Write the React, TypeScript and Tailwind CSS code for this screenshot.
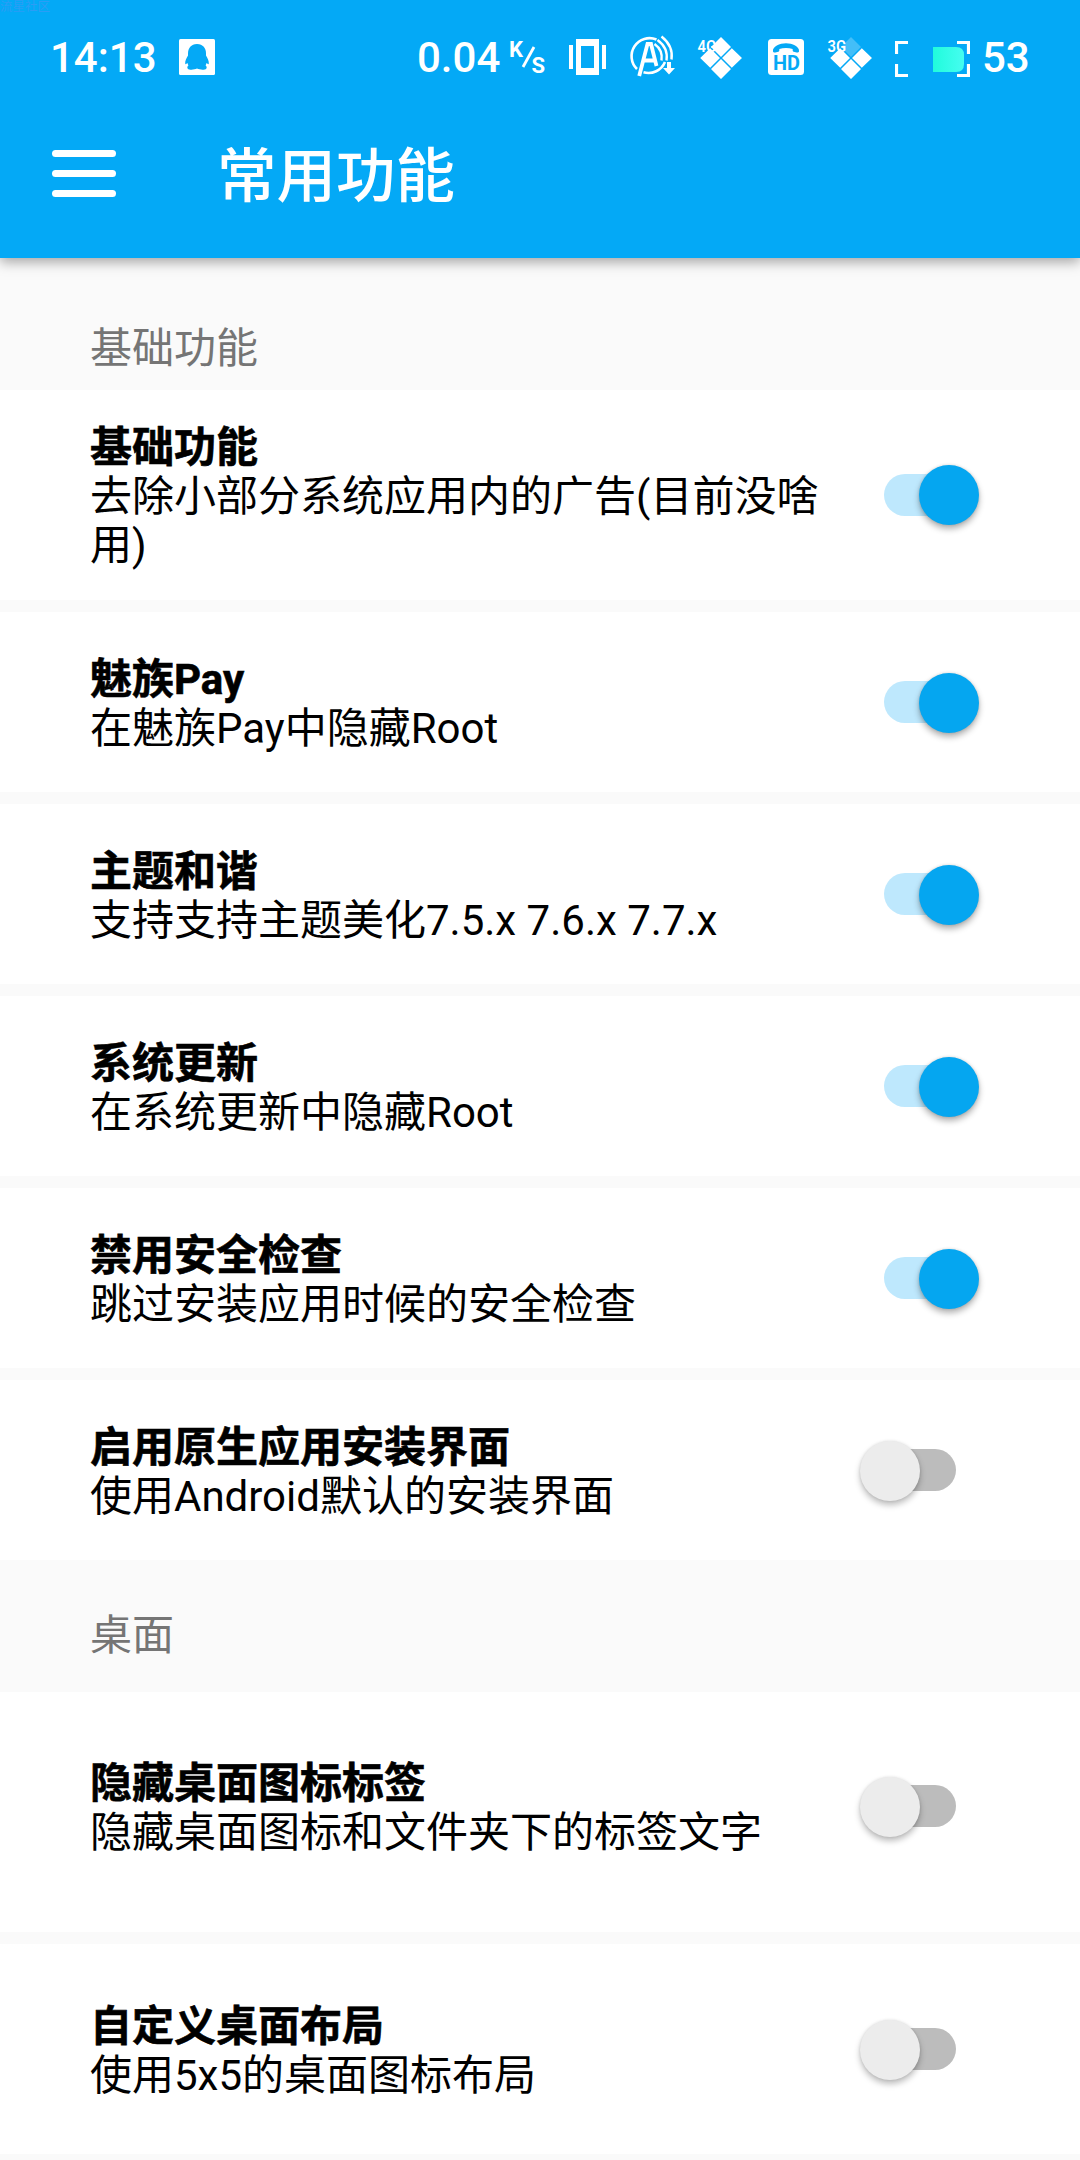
import React from "react";

type Item = { title: string; desc: string; on: boolean; size: string };

const basic: Item[] = [
  { title: "基础功能", desc: "去除小部分系统应用内的广告(目前没啥用)", on: true, size: "h-[210px] pb-px" },
  { title: "魅族Pay", desc: "在魅族Pay中隐藏Root", on: true, size: "h-[180px]" },
  { title: "主题和谐", desc: "支持支持主题美化7.5.x 7.6.x 7.7.x", on: true, size: "h-[180px]" },
  { title: "系统更新", desc: "在系统更新中隐藏Root", on: true, size: "h-[180px]" },
  { title: "禁用安全检查", desc: "跳过安装应用时候的安全检查", on: true, size: "h-[180px]" },
  { title: "启用原生应用安装界面", desc: "使用Android默认的安装界面", on: false, size: "h-[180px]" },
];

const desktop: Item[] = [
  { title: "隐藏桌面图标标签", desc: "隐藏桌面图标和文件夹下的标签文字", on: false, size: "h-[240px] pb-3" },
  { title: "自定义桌面布局", desc: "使用5x5的桌面图标布局", on: false, size: "h-[210px]" },
];

function Toggle({ on }: { on: boolean }) {
  return (
    <div role="switch" aria-checked={on} className="relative flex h-[60px] w-[120px] shrink-0 items-center px-6">
      <div className={on ? "h-[42px] w-[72px] rounded-full bg-[#bee8fd]" : "h-[42px] w-[72px] rounded-full bg-[#bcbcbc]"} />
      <div
        className={
          on
            ? "absolute right-px top-[0.5px] size-[60px] rounded-full bg-[#05a6f0] shadow-[0_4px_6px_rgba(0,0,0,0.3),0_0_3px_rgba(0,0,0,0.14)]"
            : "absolute left-0 top-[0.5px] size-[60px] rounded-full bg-[#ececec] shadow-[0_4px_6px_rgba(0,0,0,0.26),0_0_3px_rgba(0,0,0,0.1)]"
        }
      />
    </div>
  );
}

function Row({ item }: { item: Item }) {
  return (
    <div className={`flex shrink-0 items-center justify-between bg-white pl-[90px] pr-[100px] ${item.size}`}>
      <div className="w-[740px] pt-1 text-[42px] leading-[49px] text-black">
        <div className="font-bold [-webkit-text-stroke:0.6px_#000]">{item.title}</div>
        <div>{item.desc}</div>
      </div>
      <Toggle on={item.on} />
    </div>
  );
}

function Section({ title, items, heading }: { title: string; items: Item[]; heading: string }) {
  return (
    <section>
      <h2 className={`flex h-[132px] items-end pl-[90px] text-[42px] leading-[50px] text-[#757575] ${heading}`}>{title}</h2>
      <div className="flex flex-col gap-3">
        {items.map((item) => (
          <Row key={item.title} item={item} />
        ))}
      </div>
    </section>
  );
}

function QQIcon() {
  return (
    <svg className="ml-[24px] shrink-0" width="36" height="36" viewBox="0 0 36 36">
      <rect width="36" height="36" rx="1.5" fill="#fff" />
      <path
        d="M18 5c-6 0-9 4.300-9 9.500v2c-1.500 2.500-3 5.500-2.800 8 .1 1 1 .8 2.200-.5l1 2.500c-1.200.8-1.400 2.200-.6 3.200 1.200 1.300 6.200 1.300 9.200-.2 3 1.500 8 1.500 9.200.2.800-1 .600-2.400-.6-3.200l1-2.500c1.200 1.300 2.100 1.500 2.200.5.200-2.500-1.300-5.500-2.800-8v-2C27 9.300 24 5 18 5z"
        fill="#04a9f6"
      />
    </svg>
  );
}

function VibrateIcon() {
  return (
    <svg className="ml-[23px] shrink-0" width="37" height="36" viewBox="0 0 37 36" fill="#fff">
      <path d="M7 0h23v36H7zM12 7v22h13V7z" fillRule="evenodd" />
      <path d="M0 6h4v24H0zM33 6h4v24h-4z" />
    </svg>
  );
}

function AssistIcon() {
  return (
    <svg className="ml-[23px] shrink-0" width="46" height="44" viewBox="0 0 46 44" fill="none" stroke="#fff">
      <path d="M27.500 4.500A18 18 0 0 0 8 34M14.500 37.300A18 18 0 0 0 36 27" strokeWidth="2.600" />
      <path d="M10.200 41L18.500 9h3.500l5.500 22M14 25.500h12" strokeWidth="3.800" />
      <path d="M25.500 9Q34 15 32.500 25.500M28.500 5Q39.500 13 37.500 25.500M32.500 1.500Q44.500 11 42.500 24.500" strokeWidth="2.400" />
      <path d="M38 27h4v6h4l-6 6.500-6-6.500h4z" fill="#fff" stroke="none" />
    </svg>
  );
}

function SignalIcon({ label, weak, spacing }: { label: string; weak: boolean; spacing: string }) {
  return (
    <svg className={`shrink-0 overflow-visible ${spacing}`} width="46" height="44" viewBox="0 0 46 44" fill="#fff">
      <path d="M24 1l10 10-10 10-10-10z" fillOpacity={weak ? 0.25 : 1} />
      <path d="M13.200 12.200L23 22l-9.800 9.800L3.200 22zM34.800 12.200L45 22l-10.200 9.800L25 22zM24 23l10 10-10 10-10-10z" />
      <text x="0.500" y="15.500" fontSize="16.500" fontWeight="600" fontFamily="Roboto, sans-serif" textLength="18.500" lengthAdjust="spacingAndGlyphs">
        {label}
      </text>
    </svg>
  );
}

function HDIcon() {
  return (
    <svg className="ml-[25px] shrink-0" width="36" height="36" viewBox="0 0 36 36">
      <rect width="36" height="36" rx="3.500" fill="#fff" />
      <path d="M5 12.500C4 7.500 12 4.200 18 4.200s14 3.300 13 8.300c-.3 1-1.300 1.200-2.300 1l-3-.7c-1-.3-1.200-1.300-1-2.800-4-1.400-9.400-1.400-13.400 0 .2 1.500 0 2.500-1 2.800l-3 .7c-1 .2-2 0-2.300-1z" fill="#04a9f6" />
      <text x="18.400" y="31" textAnchor="middle" textLength="27" lengthAdjust="spacingAndGlyphs" fontSize="21" fontWeight="700" fontFamily="Roboto, sans-serif" fill="#04a9f6">
        HD
      </text>
    </svg>
  );
}

function BatteryIcon() {
  return (
    <svg className="ml-[22px] mt-[3px] shrink-0" width="75" height="36" viewBox="0 0 75 36">
      <defs>
        <linearGradient id="charge" x1="0" x2="1">
          <stop offset="0" stopColor="#20fcdc" />
          <stop offset="1" stopColor="#46fdf0" />
        </linearGradient>
      </defs>
      <path d="M38 6h23q8 0 8 8v9q0 8-8 8H38z" fill="url(#charge)" />
      <path d="M13 1.500H1.500V13M1.500 23v11.500H13M62 1.500h11.500V13M73.500 23v11.500H62" fill="none" stroke="#fff" strokeWidth="3.200" />
    </svg>
  );
}

function StatusBar() {
  return (
    <div className="relative flex h-[114px] items-center pl-[50px] text-[42px] font-medium leading-[50px]">
      <span className="absolute left-0 top-0 text-[12.500px] leading-[13px] font-normal text-[#2b9df5]">流星社区</span>
      <span className="w-[105px] whitespace-nowrap pt-0.5">14:13</span>
      <QQIcon />
      <span className="ml-[202px] w-[84px] whitespace-nowrap pt-0.5">0.04</span>
      <svg className="ml-[9px] shrink-0 overflow-visible" width="36" height="36" viewBox="0 0 36 36" fill="#fff">
        <text x="-1" y="18" fontSize="22" fontWeight="700" fontFamily="Roboto, sans-serif">K</text>
        <path d="M13 28L24 8" stroke="#fff" strokeWidth="2.800" />
        <text x="21.500" y="34" fontSize="22" fontWeight="700" fontFamily="Roboto, sans-serif">S</text>
      </svg>
      <VibrateIcon />
      <AssistIcon />
      <SignalIcon label="4G" weak={false} spacing="ml-[22px] mt-px" />
      <HDIcon />
      <SignalIcon label="3G" weak={true} spacing="ml-[23px] mt-px" />
      <BatteryIcon />
      <span className="ml-[12px] pt-0.5">53</span>
    </div>
  );
}

export default function App() {
  return (
    <div
      className="h-[2160px] w-[1080px] overflow-hidden bg-[#fafafa]"
      style={{ fontFamily: 'Roboto, "Noto Sans CJK SC", sans-serif' }}
    >
      <header className="relative h-[258px] bg-[#04a9f6] text-white shadow-[0_4px_12px_rgba(0,0,0,0.35)]">
        <StatusBar />
        <div className="flex h-[120px] items-center pl-[52px]">
          <button aria-label="菜单" className="flex w-16 flex-col gap-[13px] pb-px">
            <span className="h-[7px] rounded-full bg-white" />
            <span className="h-[7px] rounded-full bg-white" />
            <span className="h-[7px] rounded-full bg-white" />
          </button>
          <h1 className="ml-[101px] pt-1.5 text-[59.500px] font-medium leading-[70px]">常用功能</h1>
        </div>
      </header>
      <main>
        <Section title="基础功能" items={basic} heading="pb-4" />
        <Section title="桌面" items={desktop} heading="pb-[31px]" />
      </main>
    </div>
  );
}
